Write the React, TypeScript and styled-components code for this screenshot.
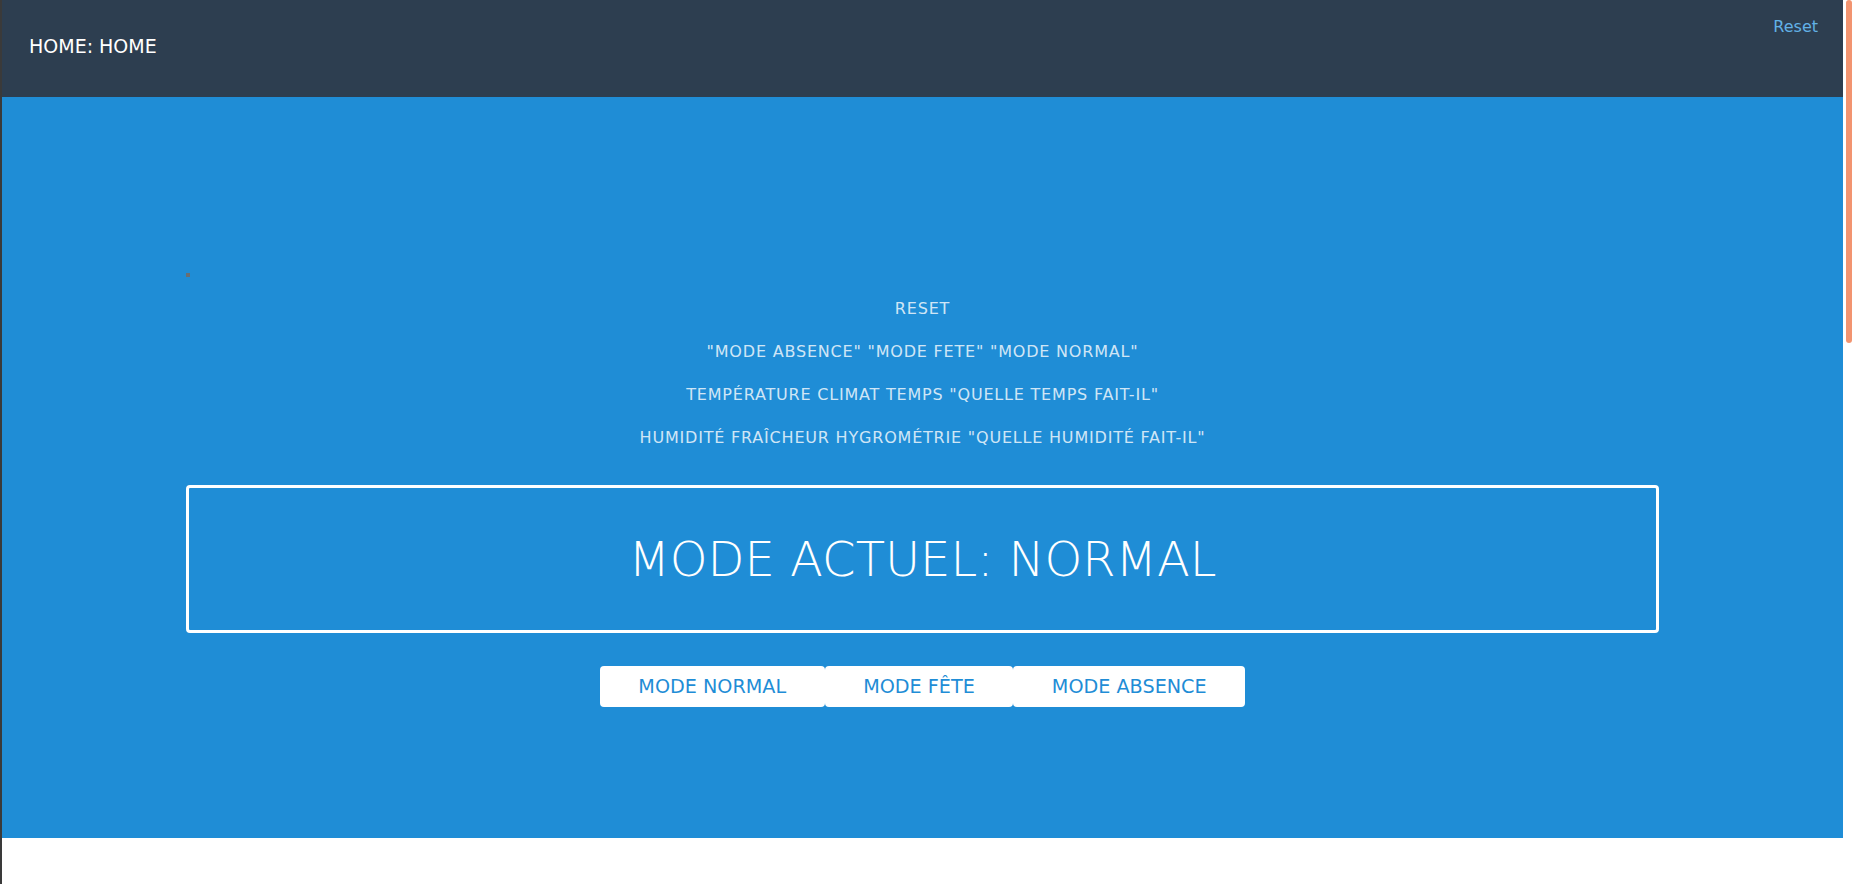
import React from "react";
import styled, { createGlobalStyle } from "styled-components";

const GlobalStyle = createGlobalStyle`
  html, body {
    margin: 0;
    padding: 0;
    height: 100%;
    overflow: hidden;
    background: #ffffff;
    font-family: "DejaVu Sans", "Liberation Sans", sans-serif;
  }
  #root { height: 100%; }
  * { box-sizing: border-box; }
`;

const Frame = styled.div`
  display: flex;
  height: 100vh;
  width: 100%;
`;

const WindowEdge = styled.div`
  width: 2px;
  flex: none;
  background: #3a3a3a;
`;

const Content = styled.div`
  flex: 1;
  display: flex;
  flex-direction: column;
  min-width: 0;
`;

const ScrollTrack = styled.div`
  width: 12px;
  flex: none;
  background: #ffffff;
  padding-left: 3px;
`;

const ScrollThumb = styled.div`
  width: 6px;
  height: 343px;
  border-radius: 3px;
  background: #f29470;
`;

const Header = styled.header`
  height: 97px;
  flex: none;
  background: #2d3e50;
  display: flex;
  justify-content: space-between;
  align-items: flex-start;
  padding: 0 25px 0 27px;
`;

const SiteTitle = styled.div`
  margin-top: 35px;
  color: #ffffff;
  font-size: 19px;
  line-height: normal;
`;

const ResetLink = styled.a`
  margin-top: 17px;
  color: #62b1e6;
  font-size: 16px;
  line-height: normal;
  text-decoration: none;
  cursor: pointer;
`;

const Main = styled.main`
  height: 741px;
  flex: none;
  background: #1f8dd6;
`;

const Container = styled.div`
  width: 80%;
  margin: 0 auto;
  padding-top: 176px;
  display: flex;
  flex-direction: column;
`;

const BrokenDot = styled.span`
  width: 4px;
  height: 4px;
  background: #6a6e72;
  display: block;
`;

const Commands = styled.div`
  margin-top: 10px;
  display: flex;
  flex-direction: column;
  align-items: center;
`;

const Command = styled.div`
  line-height: 43px;
  height: 43px;
  font-size: 16px;
  letter-spacing: 0.05em;
  text-transform: uppercase;
  color: rgba(255, 255, 255, 0.8);
  white-space: nowrap;
`;

const ModeBox = styled.div`
  margin-top: 26px;
  height: 148px;
  border: 3px solid #ffffff;
  border-radius: 4px;
  display: flex;
  align-items: center;
  justify-content: center;
`;

const ModeTitle = styled.h1`
  margin: 0;
  font-family: "DejaVu Sans ExtraLight", "DejaVu Sans", sans-serif;
  font-weight: 200;
  font-size: 48px;
  line-height: normal;
  color: #ffffff;
  letter-spacing: 0;
  text-transform: uppercase;
`;

const ButtonRow = styled.div`
  margin-top: 33px;
  display: flex;
  justify-content: center;
`;

const ModeButton = styled.button`
  height: 41px;
  padding: 0 38.5px;
  border: none;
  border-radius: 4px;
  background: #ffffff;
  color: #1f8dd6;
  font-family: "DejaVu Sans", sans-serif;
  font-size: 19.2px;
  line-height: normal;
  text-transform: uppercase;
  cursor: pointer;
`;

const commands = [
  "Reset",
  "\"Mode absence\" \"Mode fete\" \"Mode normal\"",
  "Température climat temps \"quelle temps fait-il\"",
  "Humidité fraîcheur hygrométrie \"quelle humidité fait-il\"",
];

const modes = ["Mode normal", "Mode fête", "Mode absence"];

export default function App() {
  return (
    <>
      <GlobalStyle />
      <Frame>
        <WindowEdge />
        <Content>
          <Header>
            <SiteTitle>HOME: HOME</SiteTitle>
            <ResetLink>Reset</ResetLink>
          </Header>
          <Main>
            <Container>
              <BrokenDot />
              <Commands>
                {commands.map((c) => (
                  <Command key={c}>{c}</Command>
                ))}
              </Commands>
              <ModeBox>
                <ModeTitle>Mode actuel: normal</ModeTitle>
              </ModeBox>
              <ButtonRow>
                {modes.map((m) => (
                  <ModeButton key={m}>{m}</ModeButton>
                ))}
              </ButtonRow>
            </Container>
          </Main>
        </Content>
        <ScrollTrack>
          <ScrollThumb />
        </ScrollTrack>
      </Frame>
    </>
  );
}
